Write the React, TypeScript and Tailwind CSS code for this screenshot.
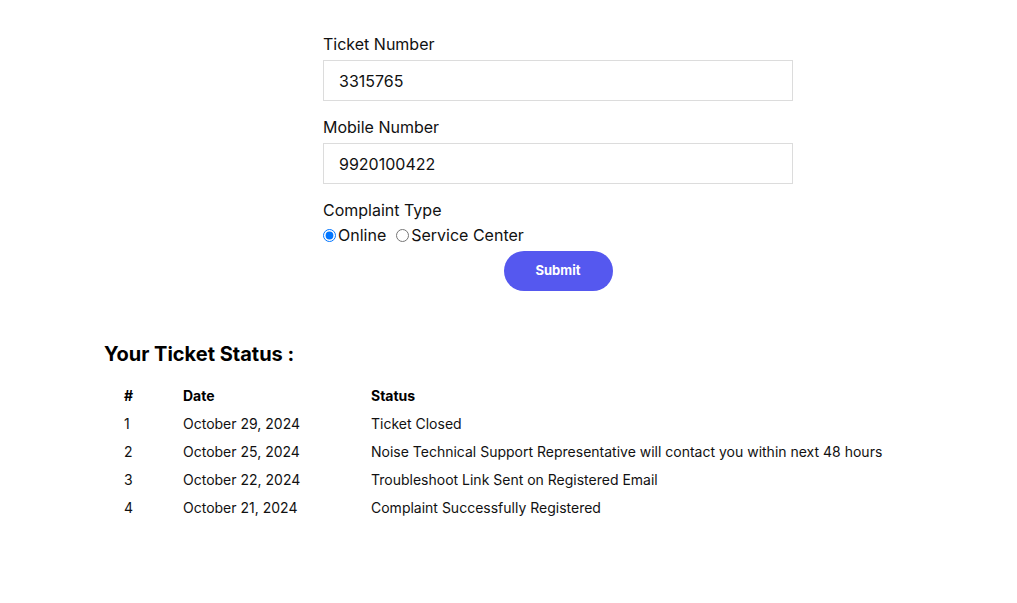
const rows = [
  { n: 1, date: "October 29, 2024", status: "Ticket Closed" },
  {
    n: 2,
    date: "October 25, 2024",
    status: "Noise Technical Support Representative will contact you within next 48 hours",
  },
  { n: 3, date: "October 22, 2024", status: "Troubleshoot Link Sent on Registered Email" },
  { n: 4, date: "October 21, 2024", status: "Complaint Successfully Registered" },
];

function Field({ label, value, className }: { label: string; value: string; className?: string }) {
  return (
    <div className={className}>
      <label className="block text-base leading-6 text-[#111]">{label}</label>
      <input
        readOnly
        value={value}
        className="mt-1 block h-[41px] w-full border border-[#dcdcdc] bg-white px-[15px] text-base text-[#111] outline-none"
      />
    </div>
  );
}

export default function App() {
  return (
    <div className="min-h-[603px] w-full bg-white font-['Inter',sans-serif] text-black">
      <div className="ml-[323px] w-[470px] pt-8">
        <Field label="Ticket Number" value="3315765" />
        <Field label="Mobile Number" value="9920100422" className="mt-[14px]" />
        <div className="mt-[14px]">
          <div className="text-base leading-6 text-[#111]">Complaint Type</div>
          <div className="flex h-[25px] items-center pt-px text-base text-[#111]">
            <label className="flex items-center">
              <input type="radio" name="type" defaultChecked className="m-0 mr-[2px] size-[13px]" />
              <span>Online</span>
            </label>
            <label className="ml-[10px] flex items-center">
              <input type="radio" name="type" className="m-0 mr-[2px] size-[13px]" />
              <span>Service Center</span>
            </label>
          </div>
          <div className="mt-1 flex justify-center">
            <button className="h-10 w-[109px] rounded-full bg-[#5558ef] text-[13px] font-bold text-white">
              Submit
            </button>
          </div>
        </div>
      </div>

      <div className="ml-[104px] mt-[49px]">
        <h2 className="text-xl leading-7 font-bold">Your Ticket Status :</h2>
        <div className="mt-[14px] pl-5 text-sm text-[#111]">
          <div className="flex h-7 items-center font-bold text-black">
            <div className="w-[59px]">#</div>
            <div className="w-[188px]">Date</div>
            <div>Status</div>
          </div>
          {rows.map((r) => (
            <div key={r.n} className="flex h-7 items-center">
              <div className="w-[59px]">{r.n}</div>
              <div className="w-[188px]">{r.date}</div>
              <div>{r.status}</div>
            </div>
          ))}
        </div>
      </div>
    </div>
  );
}
